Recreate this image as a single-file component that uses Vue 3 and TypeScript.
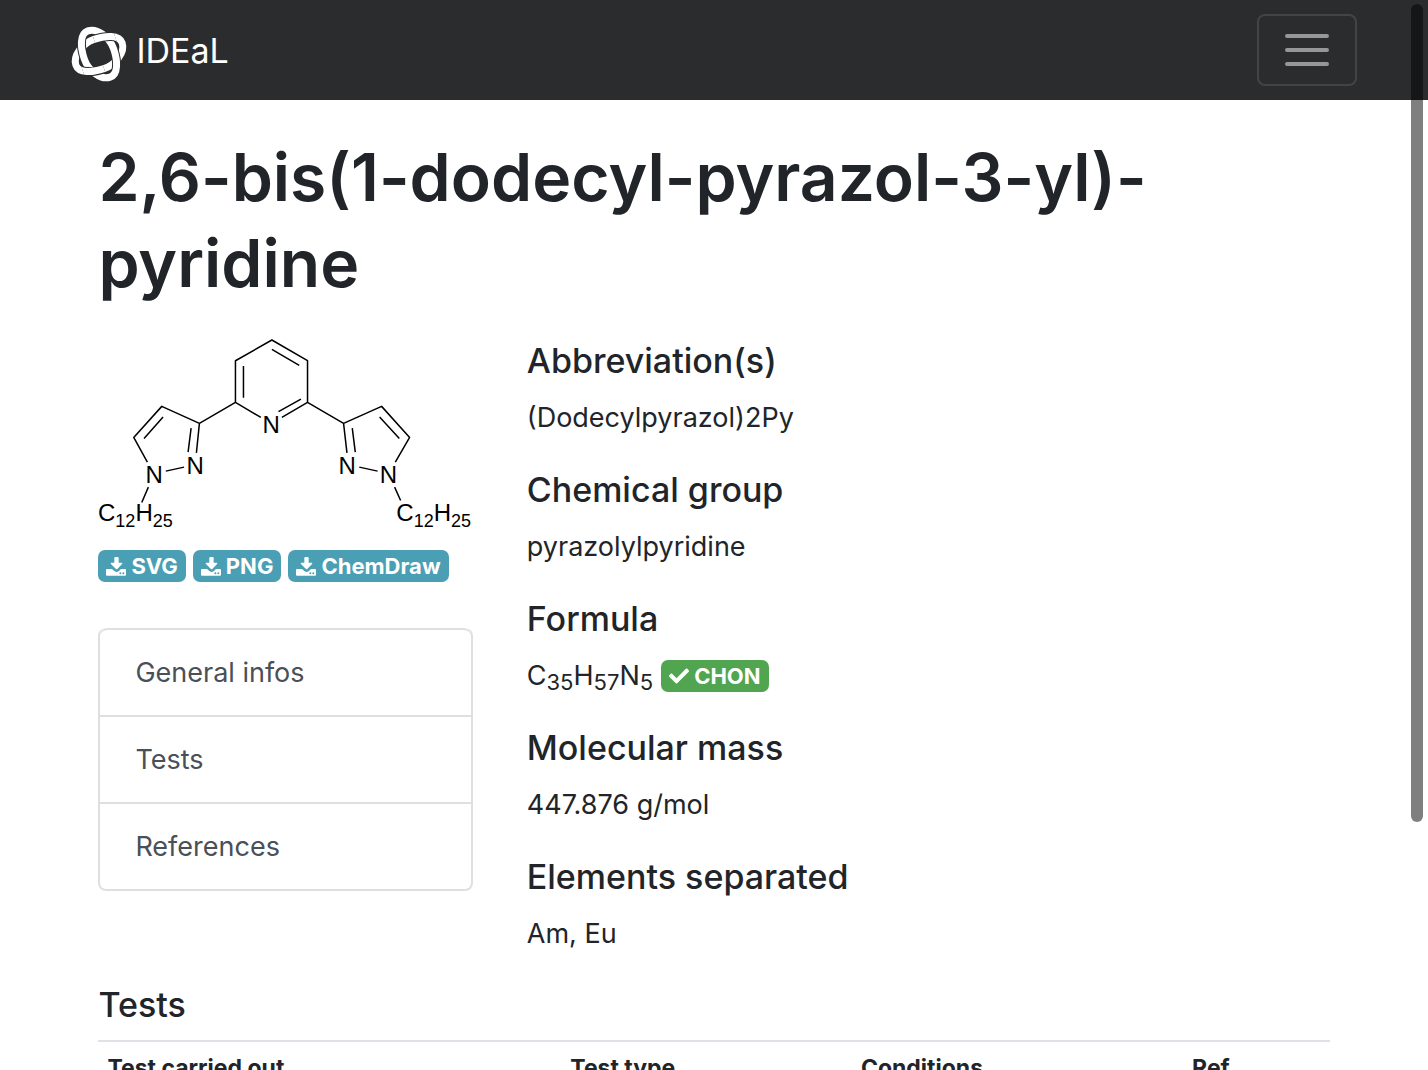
<script setup lang="ts">
const downloads: string[] = ['SVG', 'PNG', 'ChemDraw']
const sections: { label: string; href: string }[] = [
  { label: 'General infos', href: '#infos' },
  { label: 'Tests', href: '#tests' },
  { label: 'References', href: '#references' },
]
const columns: string[] = ['Test carried out', 'Test type', 'Conditions', 'Ref']
const ring = 'M28 12.5C40 12.5 53.5 16 53.5 25C53.5 35 40 43.5 28 43.5C16 43.5 2.5 40 2.5 31C2.5 21 16 12.5 28 12.5Z'
</script>

<template>
  <div class="page">
    <header class="navbar">
      <a class="brand" href="#">
        <svg class="logo" viewBox="0 0 56 56" aria-hidden="true">
          <defs>
            <clipPath id="over">
              <path d="M28 0H49V24H28ZM28 56H7V32H28Z" />
            </clipPath>
          </defs>
          <g fill="none">
            <g transform="rotate(-19 28 28)">
              <path :d="ring" stroke="#fff" stroke-width="7" />
            </g>
            <g transform="rotate(71 28 28)">
              <path :d="ring" stroke="#2b2c2e" stroke-width="9" />
              <path :d="ring" stroke="#fff" stroke-width="7" />
            </g>
            <g transform="rotate(-19 28 28)" clip-path="url(#over)">
              <path :d="ring" stroke="#2b2c2e" stroke-width="9" />
              <path :d="ring" stroke="#fff" stroke-width="7" />
            </g>
          </g>
        </svg>
        <span>IDEaL</span>
      </a>
      <button class="toggler" type="button" aria-label="Toggle navigation">
        <svg viewBox="0 0 44 32" aria-hidden="true">
          <path d="M2 2H42M2 16H42M2 30H42" stroke="#97979a" stroke-width="4" stroke-linecap="round" />
        </svg>
      </button>
    </header>

    <main class="container">
      <h1>2,6-bis(1-dodecyl-pyrazol-3-yl)-pyridine</h1>
      <div class="row">
        <div class="side">
          <svg class="molecule" viewBox="0 0 374 192" role="img" aria-label="Molecular structure">
            <g fill="none" stroke="#000" stroke-width="1.5" stroke-linejoin="round">
              <path d="M162.7 79.3L137.3 64.3V22.7L173.7 2L209.3 22.7V64.3L183.7 79.3" />
              <path d="M145.3 28V59.7M173.7 11.3L201 27.3M202.7 61L180.3 73.5" />
              <path d="M137.3 64.3L101.3 85.3L63.7 68.3L35.7 99.3L49.3 124M101.3 85.3L98.3 114.7M93 90L90 114M65 79L46 100.3M67.7 133L86 129M50.3 149L43.7 164.3" />
              <path d="M209.3 64.3L245.3 85.3L283.3 68.3L311.3 99.3L297 124M245.3 85.3L248.7 114.7M254 90L257 114M281.3 79L301 100.3M279.3 133L261 129M296.3 149L302.3 162.3" />
            </g>
            <g class="atoms">
              <g text-anchor="middle">
                <text x="173" y="95">N</text>
                <text x="56" y="145">N</text>
                <text x="97" y="136">N</text>
                <text x="249" y="136">N</text>
                <text x="290" y="145">N</text>
              </g>
              <text x="0" y="183">C<tspan class="index" dy="6">12</tspan><tspan dy="-6">H</tspan><tspan class="index" dy="6">25</tspan></text>
              <text x="298" y="183">C<tspan class="index" dy="6">12</tspan><tspan dy="-6">H</tspan><tspan class="index" dy="6">25</tspan></text>
            </g>
          </svg>
          <div class="downloads">
            <a v-for="d in downloads" :key="d" class="badge info" href="#">
              <svg class="download" viewBox="0 0 60 57" aria-hidden="true">
                <g fill="currentColor">
                  <path d="M28 0H35Q38 0 38 3V17H47Q51 18 48 21L34 36Q32 38 30 36L15 21Q12 18 16 17H25V3Q25 0 28 0Z" />
                  <path d="M3 36H18L26 43Q32 47 38 43L45 36H57Q60 36 60 39V53Q60 56 57 56H3Q0 56 0 53V39Q0 36 3 36Z" />
                </g>
                <g fill="#4b9fb5">
                  <circle cx="43" cy="49" r="3" />
                  <circle cx="52" cy="49" r="3" />
                </g>
              </svg>
              <span>{{ d }}</span>
            </a>
          </div>
          <nav class="list">
            <a v-for="s in sections" :key="s.label" :href="s.href">{{ s.label }}</a>
          </nav>
        </div>

        <section id="infos" class="infos">
          <h2>Abbreviation(s)</h2>
          <p>(Dodecylpyrazol)2Py</p>
          <h2>Chemical group</h2>
          <p>pyrazolylpyridine</p>
          <h2>Formula</h2>
          <p class="formula">
            <span>C<sub>35</sub>H<sub>57</sub>N<sub>5</sub></span>
            <span class="badge success">
              <svg class="check" viewBox="0 0 512 512" aria-hidden="true">
                <path fill="currentColor" d="M174 439L7 272c-10-10-10-26 0-36l37-36c10-10 26-10 36 0l112 112L432 72c10-10 26-10 36 0l37 37c10 10 10 26 0 36L210 439c-10 10-26 10-36 0z" />
              </svg>
              <span>CHON</span>
            </span>
          </p>
          <h2>Molecular mass</h2>
          <p>447.876 g/mol</p>
          <h2>Elements separated</h2>
          <p>Am, Eu</p>
        </section>
      </div>

      <section id="tests">
        <h2>Tests</h2>
        <table>
          <colgroup>
            <col class="c-test" />
            <col class="c-type" />
            <col class="c-cond" />
            <col class="c-ref" />
          </colgroup>
          <thead>
            <tr>
              <th v-for="c in columns" :key="c" scope="col">{{ c }}</th>
            </tr>
          </thead>
        </table>
      </section>
    </main>
    <div class="scroll-thumb" aria-hidden="true"></div>
  </div>
</template>

<style>
body {
  margin: 0;
  background: #fff;
}
</style>

<style scoped>
* {
  box-sizing: border-box;
}
.page {
  position: relative;
  height: 100vh;
  overflow: hidden;
  font-family: Inter, 'Liberation Sans', sans-serif;
  font-size: 27px;
  line-height: 43px;
  color: #212529;
}
.navbar {
  display: flex;
  align-items: center;
  justify-content: space-between;
  height: 100px;
  padding: 0 5%;
  background: #2b2c2e;
}
.brand {
  display: flex;
  align-items: center;
  gap: 9px;
  color: #fff;
  font-size: 34px;
  text-decoration: none;
}
.logo {
  width: 56px;
  height: 56px;
  margin-top: 8px;
  overflow: visible;
}
.toggler {
  display: flex;
  align-items: center;
  justify-content: center;
  width: 100px;
  height: 72px;
  padding: 0;
  border: 2px solid #434446;
  border-radius: 8px;
  background: transparent;
}
.toggler svg {
  width: 44px;
  height: 32px;
}
.container {
  margin: 0 5%;
  padding: 34px 27px 0;
}
h1 {
  margin: 0 0 33px;
  font-size: 66px;
  line-height: 86px;
  font-weight: 600;
}
h2 {
  margin: 0 0 14px;
  font-size: 34px;
  line-height: 43px;
  font-weight: 500;
}
p {
  margin: 0 0 29px;
}
.infos p:last-child {
  margin-bottom: 28px;
}
.row {
  display: grid;
  grid-template-columns: 1fr 2fr;
  margin: 0 -27px;
}
.side,
.infos {
  padding: 0 27px;
}
.side {
  margin-top: -1px;
}
.molecule {
  display: block;
  width: 100%;
}
.atoms {
  font-family: 'Liberation Sans', Arial, sans-serif;
  font-size: 24px;
  fill: #000;
}
.index {
  font-size: 18px;
}
.downloads {
  display: flex;
  gap: 7px;
  margin: 20px 0 46px;
}
.badge {
  display: inline-flex;
  align-items: center;
  gap: 5px;
  height: 32px;
  padding: 0 8px;
  border-radius: 7px;
  color: #fff;
  font-size: 22px;
  line-height: 32px;
  font-weight: 700;
  text-decoration: none;
}
.download {
  width: 20px;
  height: 19px;
}
.check {
  width: 20px;
  height: 20px;
}
.info {
  background: #4b9fb5;
}
.success {
  background: #52a550;
}
.list {
  border: 2px solid #dfdfdf;
  border-top: 0;
  border-radius: 8px;
}
.list a {
  display: block;
  padding: 21px 35px;
  border-top: 2px solid #dfdfdf;
  color: #495057;
  text-decoration: none;
}
.list a:first-child {
  border-radius: 8px 8px 0 0;
}
.formula {
  display: flex;
  align-items: center;
  gap: 8px;
}
sub {
  position: relative;
  bottom: -5px;
  font-size: 22px;
  line-height: 0;
  vertical-align: baseline;
}
table {
  width: 100%;
  border-collapse: collapse;
  table-layout: fixed;
}
.c-test {
  width: 37.6%;
}
.c-type {
  width: 23.6%;
}
.c-cond {
  width: 26.9%;
}
th {
  padding: 8px 9px;
  border-top: 2px solid #dee2e6;
  font-size: 23px;
  line-height: 36px;
  font-weight: 700;
  text-align: left;
}
.scroll-thumb {
  position: absolute;
  top: 4px;
  right: 5px;
  width: 12px;
  height: 818px;
  border-radius: 6px;
  background: rgba(0, 0, 0, 0.5);
}
</style>
